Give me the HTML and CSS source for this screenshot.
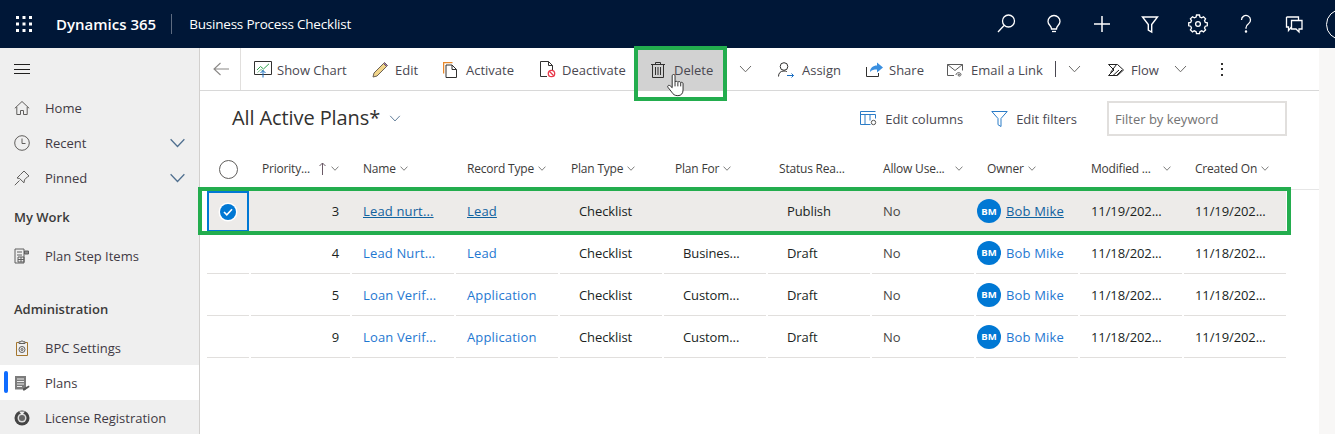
FILE: index.html
```html
<!DOCTYPE html>
<html>
<head>
    <title>Business Process Checklist</title>
    <link rel="stylesheet" href="styles.css">
</head>
<body>
    <svg class="sprite" width="0" height="0">
        <symbol id="chev" viewBox="0 0 12 8"><path d="M.5 1 6 6.800 11.500 1" fill="none" stroke="currentColor" stroke-width="1"/></symbol>
    </svg>

    <header class="topbar">
        <svg class="waffle" width="16" height="16" viewBox="0 0 16 16" fill="#fff">
            <rect x="0" y="0" width="3" height="3"/><rect x="6.500" y="0" width="3" height="3"/><rect x="13" y="0" width="3" height="3"/>
            <rect x="0" y="6.500" width="3" height="3"/><rect x="6.500" y="6.500" width="3" height="3"/><rect x="13" y="6.500" width="3" height="3"/>
            <rect x="0" y="13" width="3" height="3"/><rect x="6.500" y="13" width="3" height="3"/><rect x="13" y="13" width="3" height="3"/>
        </svg>
        <span class="brand">Dynamics 365</span>
        <span class="app-name">Business Process Checklist</span>
        <div class="top-icons">
            <svg width="48" height="48" viewBox="0 0 48 48" fill="none" stroke="#fff" stroke-width="1.300"><circle cx="26.500" cy="21" r="6"/><path d="M22 25.500 16 32"/></svg>
            <svg width="48" height="48" viewBox="0 0 48 48" fill="none" stroke="#fff" stroke-width="1.300"><path d="M21.500 29c0-3.500-3.500-4-3.500-7.500a6 6 0 0 1 12 0c0 3.500-3.500 4-3.500 7.500z"/><path d="M22 31.500h4"/></svg>
            <svg width="48" height="48" viewBox="0 0 48 48" fill="none" stroke="#fff" stroke-width="1.500"><path d="M24 16v16M16 24h16"/></svg>
            <svg width="48" height="48" viewBox="0 0 48 48" fill="none" stroke="#fff" stroke-width="1.400"><path d="M16.500 17h15l-5.800 7.500V32l-3.400-2v-5.500z"/></svg>
            <svg width="48" height="48" viewBox="0 0 48 48" fill="none" stroke="#fff" stroke-width="1.300"><circle cx="24" cy="24" r="2.400"/><path d="M22.500 16.500h3l.4 2 1.800.8 1.800-1.100 2.100 2.100-1.100 1.800.8 1.800 2 .4v3l-2 .4-.8 1.800 1.100 1.800-2.100 2.100-1.800-1.100-1.800.8-.4 2h-3l-.4-2-1.800-.8-1.800 1.100-2.100-2.100 1.100-1.800-.8-1.800-2-.4v-3l2-.4.8-1.800-1.100-1.800 2.100-2.100 1.800 1.100 1.800-.8z" transform="translate(0 -1.500)"/></svg>
            <svg width="48" height="48" viewBox="0 0 48 48" fill="none" stroke="#fff" stroke-width="1.300"><path d="M19.500 20a4.500 4.500 0 1 1 7 3.700c-1.600 1.100-2.500 2-2.500 4v1"/><circle cx="24" cy="31.500" r=".6" fill="#fff"/></svg>
            <svg width="48" height="48" viewBox="0 0 48 48" fill="none" stroke="#fff" stroke-width="1.300"><path d="M16.500 17h12v3M16.500 17v10h2v3.500l3-3.500"/><path d="M21.500 20.500h10.500v8.500h-3v3l-3-3h-4.500z"/></svg>
        </div>
        <span class="top-avatar"></span>
    </header>

    <div class="layout">
        <nav class="sidebar">
            <div class="burger"><span></span><span></span><span></span></div>

            <a class="nav-item">
                <svg width="16" height="16" viewBox="0 0 16 16" fill="none" stroke="#605e5c"><path d="M.8 8.300 8 1.500l7.200 6.800M2.800 7v7.500h3.700v-4h3v4h3.700V7"/></svg>
                Home
            </a>
            <a class="nav-item">
                <svg width="16" height="16" viewBox="0 0 16 16" fill="none" stroke="#605e5c"><circle cx="8" cy="8" r="7.300"/><path d="M8 3.500V8.500h3.500"/></svg>
                Recent
                <svg class="nav-chev" width="17" height="10"><use href="#chev"/></svg>
            </a>
            <a class="nav-item">
                <svg width="16" height="16" viewBox="0 0 16 16" fill="none" stroke="#605e5c"><path d="m10 1 5 5-1.500.8-3 3-.5 3L5.500 8.500l-2.500-.5 3.500-3.500zM5.500 10.500.8 15.200"/></svg>
                Pinned
                <svg class="nav-chev" width="17" height="10"><use href="#chev"/></svg>
            </a>

            <div class="nav-group">My Work</div>
            <a class="nav-item">
                <svg width="16" height="16" viewBox="0 0 16 16" fill="none" stroke="#5f5f5f"><path d="M1 1h9v14H1zM3 4h5M3 7h5"/><path d="M10.500 3h4v3h-4z" fill="#8a8a8a"/><path d="M4 9h6v5H4zM7 9v5M4 11.500h6"/></svg>
                Plan Step Items
            </a>

            <div class="nav-group nav-group-gap">Administration</div>
            <a class="nav-item">
                <svg width="16" height="16" viewBox="0 0 16 16" fill="none" stroke="#605e5c"><path d="M5 2.500H2.500v13h11v-13H11" stroke="#a5762c"/><path d="M5 3.500V1.800h2a1 1 0 0 1 2 0h2v1.700z"/><circle cx="8" cy="9.500" r="3"/><circle cx="8" cy="9.500" r="1"/></svg>
                BPC Settings
            </a>
            <a class="nav-item active">
                <svg width="16" height="16" viewBox="0 0 16 16"><path d="M1 1h11v13.500H1z" fill="#7c7c7c"/><path d="M3 4h7M3 6.500h7M3 9h7M3 11.500h5" stroke="#eee"/><path d="m9 13.500 6-3 .5 1.500-5 3.500H9z" fill="#555"/></svg>
                Plans
            </a>
            <a class="nav-item">
                <svg width="16" height="16" viewBox="0 0 16 16"><circle cx="8" cy="8" r="7.500" fill="#444"/><circle cx="8" cy="8" r="4.500" fill="#ddd"/><circle cx="8" cy="8" r="3" fill="#666"/><path d="M5 1.500h6L8 5z" fill="#efefef"/></svg>
                License Registration
            </a>
        </nav>

        <main class="content">
            <div class="commandbar">
                <span class="back">
                    <svg width="16" height="14" viewBox="0 0 16 14" fill="none" stroke="#8a8886" stroke-width="1.100"><path d="M7.500 1 1 7l6.500 6M1 7h15"/></svg>
                </span>
                <a class="cmd w-chart">
                    <svg width="18" height="17" viewBox="0 0 18 17" fill="none"><path d="M.5.500h17v13H.500z" stroke="#323130"/><path d="m3 9 3.500-3.500 3 2.500L15 2.800" stroke="#2fa24b"/><path d="m3.500 11.500 3.500-3 2.500 1.500" stroke="#7fc28f"/><path d="M9 16.500V9.500M6.500 12 9 9.500l2.500 2.500" stroke="#1b6ec2"/></svg>
                    Show Chart
                </a>
                <a class="cmd w-edit">
                    <svg width="16" height="16" viewBox="0 0 16 16"><path d="M1 15l1-4L11.500 1.500l3 3L5 14z" fill="#f2d58a" stroke="#6b6054"/><path d="m11.500 1.500 1-1 3 3-1 1z" fill="#a377b8" stroke="#6b6054"/></svg>
                    Edit
                </a>
                <a class="cmd w-activate">
                    <svg width="15" height="16" viewBox="0 0 15 16" fill="none"><path d="M.5 11.500V.500h9" stroke="#e8882b" stroke-width="1.500"/><path d="M3 3h6l4.500 4.500v8H3z" fill="#fff" stroke="#323130"/><path d="M9 3v4.500h4.500" stroke="#323130"/></svg>
                    Activate
                </a>
                <a class="cmd w-deactivate">
                    <svg width="16" height="17" viewBox="0 0 16 17" fill="none"><path d="M7 15.500H.500V.500h8l4 4v5M8.500.500v4h4" stroke="#323130"/><circle cx="11.500" cy="12.500" r="3.200" stroke="#e8394a" stroke-width="1.300"/><path d="m9.300 10.300 4.400 4.400" stroke="#e8394a" stroke-width="1.300"/></svg>
                    Deactivate
                </a>
                <a class="cmd cmd-delete">
                    <svg width="14" height="16" viewBox="0 0 14 16" fill="none" stroke="#323130"><path d="M0 2.500h14M4.500 2.500V.500h5v2M1.500 2.500v13h11v-13M4.500 5v8M7 5v8M9.500 5v8"/></svg>
                    Delete
                    <span class="callout"></span>
                    <svg class="hand" width="17" height="23" viewBox="0 0 18 26" preserveAspectRatio="none"><path d="M5.500 2c0-2 3-2 3 0v7c.5-1 2.500-1 3 .3.500-1 2.500-1 3 .4 1-.7 2.500-.2 2.500 1.300v7c0 4-2 6.500-5.500 6.500S6.500 23 5 20.500L1 15c-1-1.700 1-3 2.500-1.500l2 2z" fill="#fff" stroke="#222"/><path d="M8.500 9v5M11.500 9.500V14M14.500 10v4" stroke="#222" fill="none"/></svg>
                </a>
                <span class="chev-wrap w-delchev"><svg width="13" height="8"><use href="#chev"/></svg></span>
                <a class="cmd w-assign">
                    <svg width="16" height="16" viewBox="0 0 16 16" fill="none"><circle cx="6" cy="4.500" r="3.800" stroke="#323130"/><path d="M.5 14.500c0-3.500 2-5.500 5.500-5.500 1 0 2 .2 2.800.6" stroke="#323130"/><path d="M9 13.500h6.500M13.500 11.500l2 2-2 2" stroke="#1b6ec2"/></svg>
                    Assign
                </a>
                <a class="cmd w-share">
                    <svg width="17" height="15" viewBox="0 0 17 15"><path d="M.5 5v9.500h12V11" fill="none" stroke="#323130"/><path d="M4 10c0-4 3-6.500 7-6.500V.5l6 5-6 5V7.500C8 7.500 5.500 8 4 10z" fill="#3a8fe0"/></svg>
                    Share
                </a>
                <a class="cmd w-email">
                    <svg width="16" height="14" viewBox="0 0 16 14" fill="none" stroke="#5a5a5a"><path d="M7 12.500H.500v-11h15v6"/><path d="m.5 1.500 7.500 6 7.500-6"/><path d="M9 12c0-3 5-3 5-.5 0 2-3 2-3 .5s2-1 2 0"/></svg>
                    Email a Link
                </a>
                <span class="cmd-sep"></span>
                <span class="chev-wrap w-emailchev"><svg width="13" height="8"><use href="#chev"/></svg></span>
                <a class="cmd w-flow">
                    <svg width="16" height="12" viewBox="0 0 16 12" fill="none" stroke="#222"><path d="M.5.500h9L15.500 6l-6 5.500h-9L6 6z"/><path d="m5 11.500 6-5.500M2.500 8.500 8.500 .5M9 11 14 6"/></svg>
                    Flow
                </a>
                <span class="chev-wrap w-flowchev"><svg width="13" height="8"><use href="#chev"/></svg></span>
                <span class="dots"><i></i><i></i><i></i></span>
            </div>

            <div class="titlebar">
                <h1>All Active Plans*</h1>
                <svg class="title-chev" width="12" height="7"><use href="#chev"/></svg>
                <a class="tool tool-cols">
                    <svg width="17" height="15" viewBox="0 0 17 15" fill="none" stroke="#2b7cc7"><path d="M.5.500h15M.5 3.500h15v4M.5 .5v13h10M5 3.500v10M10 3.500v6"/><circle cx="13.500" cy="11.500" r="2.200" stroke="#555"/></svg>
                    Edit columns
                </a>
                <a class="tool tool-filters">
                    <svg width="17" height="16" viewBox="0 0 17 16" fill="none" stroke="#2b7cc7"><path d="M.8.500h15.400L10 7.500v8l-3-1.800V7.500z"/></svg>
                    Edit filters
                </a>
                <input class="filter" type="text" placeholder="Filter by keyword">
            </div>

            <div class="grid-head row">
                <div class="cell-check"><span class="ring"></span></div>
                <div class="th">Priority...<svg class="sort" width="7" height="13" viewBox="0 0 7 13" fill="none" stroke="#6a5a66"><path d="M3.500 13V1M.5 4l3-3 3 3"/></svg><svg class="th-chev" width="8" height="5"><use href="#chev"/></svg></div>
                <div class="th">Name<svg class="th-chev" width="8" height="5"><use href="#chev"/></svg></div>
                <div class="th">Record Type<svg class="th-chev" width="8" height="5"><use href="#chev"/></svg></div>
                <div class="th">Plan Type<svg class="th-chev" width="8" height="5"><use href="#chev"/></svg></div>
                <div class="th">Plan For<svg class="th-chev" width="8" height="5"><use href="#chev"/></svg></div>
                <div class="th">Status Rea...</div>
                <div class="th th-wide">Allow Use...<svg class="th-chev" width="8" height="5"><use href="#chev"/></svg></div>
                <div class="th">Owner<svg class="th-chev" width="8" height="5"><use href="#chev"/></svg></div>
                <div class="th th-wide">Modified ...<svg class="th-chev" width="8" height="5"><use href="#chev"/></svg></div>
                <div class="th">Created On<svg class="th-chev" width="8" height="5"><use href="#chev"/></svg></div>
            </div>

            <div class="row data selected">
                <div class="cell-check focus"><span class="tick"><svg width="10" height="8" viewBox="0 0 10 8" fill="none" stroke="#fff" stroke-width="1.600"><path d="m1 4 2.800 2.800L9 1.200"/></svg></span></div>
                <div class="td num">3</div>
                <div class="td"><a class="link">Lead nurt...</a></div>
                <div class="td"><a class="link">Lead</a></div>
                <div class="td pad">Checklist</div>
                <div class="td pad"></div>
                <div class="td pad">Publish</div>
                <div class="td muted">No</div>
                <div class="td owner"><span class="avatar">BM</span><a class="link">Bob Mike</a></div>
                <div class="td">11/19/202...</div>
                <div class="td">11/19/202...</div>
                <span class="callout"></span>
            </div>
            <div class="row data">
                <div class="cell-check"></div>
                <div class="td num">4</div>
                <div class="td"><a class="link">Lead Nurt...</a></div>
                <div class="td"><a class="link">Lead</a></div>
                <div class="td pad">Checklist</div>
                <div class="td pad">Busines...</div>
                <div class="td pad">Draft</div>
                <div class="td muted">No</div>
                <div class="td owner"><span class="avatar">BM</span><a class="link">Bob Mike</a></div>
                <div class="td">11/18/202...</div>
                <div class="td">11/18/202...</div>
            </div>
            <div class="row data">
                <div class="cell-check"></div>
                <div class="td num">5</div>
                <div class="td"><a class="link">Loan Verif...</a></div>
                <div class="td"><a class="link">Application</a></div>
                <div class="td pad">Checklist</div>
                <div class="td pad">Custom...</div>
                <div class="td pad">Draft</div>
                <div class="td muted">No</div>
                <div class="td owner"><span class="avatar">BM</span><a class="link">Bob Mike</a></div>
                <div class="td">11/18/202...</div>
                <div class="td">11/18/202...</div>
            </div>
            <div class="row data">
                <div class="cell-check"></div>
                <div class="td num">9</div>
                <div class="td"><a class="link">Loan Verif...</a></div>
                <div class="td"><a class="link">Application</a></div>
                <div class="td pad">Checklist</div>
                <div class="td pad">Custom...</div>
                <div class="td pad">Draft</div>
                <div class="td muted">No</div>
                <div class="td owner"><span class="avatar">BM</span><a class="link">Bob Mike</a></div>
                <div class="td">11/18/202...</div>
                <div class="td">11/19/202...</div>
            </div>
        </main>
        <div class="gutter"></div>
    </div>
</body>
</html>
```

FILE: styles.css
```css
html, body {
    height: 100%;
}
body {
    margin: 0;
    font-family: "Open Sans", "Noto Sans", sans-serif;
    font-size: 13px;
    color: #323130;
    overflow: hidden;
}
.sprite {
    position: absolute;
}
svg {
    display: block;
    flex: none;
}

/* top bar */
.topbar {
    height: 48px;
    background: #001737;
    color: #fff;
    display: flex;
    align-items: center;
    overflow: hidden;
}
.waffle {
    margin-left: 16px;
}
.brand {
    margin-left: 24px;
    font-size: 15px;
    font-weight: 600;
    padding-right: 15px;
    border-right: 1px solid #5d6b80;
    line-height: 20px;
}
.app-name {
    margin-left: 17px;
    font-size: 13.500px;
    letter-spacing: -0.2px;
}
.top-icons {
    margin-left: auto;
    display: flex;
}
.top-avatar {
    flex: none;
    width: 29px;
    height: 29px;
    margin: 0 -22px 0 8px;
    border: 1px solid #fff;
    border-radius: 50%;
}

.layout {
    display: flex;
    height: calc(100% - 48px);
}

/* left nav */
.sidebar {
    width: 199px;
    flex: none;
    background: #efefef;
    border-right: 1px solid #d2d0ce;
}
.burger {
    height: 42px;
    padding: 16px 0 0 14px;
    box-sizing: border-box;
}
.burger span {
    display: block;
    width: 16px;
    height: 1px;
    background: #201f1e;
    margin-bottom: 3.500px;
}
.nav-item {
    height: 35px;
    display: flex;
    align-items: center;
    gap: 15px;
    padding-left: 14px;
    position: relative;
    color: #3f3a44;
}
.nav-chev {
    margin-left: auto;
    margin-right: 13px;
    color: #4f6f8f;
}
.nav-group {
    height: 43px;
    line-height: 44px;
    padding-left: 14px;
    font-weight: 600;
    color: #3b3a39;
}
.nav-group-gap {
    margin-top: 15px;
    height: 42px;
    line-height: 42px;
}
.nav-item.active {
    background: #fff;
}
.nav-item.active::before {
    content: "";
    position: absolute;
    left: 4px;
    top: 6px;
    width: 4px;
    height: 22px;
    border-radius: 2px;
    background: #0f6cff;
}

/* main */
.content {
    width: 1119px;
    flex: none;
}
.gutter {
    flex: 1;
    background: #f8f7f6;
}
.commandbar {
    height: 42px;
    border-bottom: 1px solid #d8d8d8;
    display: flex;
    align-items: center;
    color: #4a4851;
}
.back {
    width: 41px;
    height: 42px;
    border-right: 1px solid #e1dfdd;
    display: flex;
    align-items: center;
    padding-left: 13px;
    box-sizing: border-box;
    margin-right: 13px;
}
.cmd {
    display: flex;
    align-items: center;
    gap: 6px;
    flex: none;
    height: 41px;
    padding-top: 1px;
    box-sizing: border-box;
    white-space: nowrap;
}
.w-chart { width: 118px; gap: 5px; }
.w-edit { width: 71px; gap: 7px; }
.w-activate { width: 97px; gap: 8px; }
.w-deactivate { width: 98px; gap: 6px; }
.cmd-delete {
    width: 85px;
    background: #d2d2d2;
    padding: 0 0 2px 13px;
    gap: 9px;
    position: relative;
    align-self: flex-start;
    margin-top: 2px;
}
.w-delchev { width: 55px; padding-left: 16px; }
.w-assign { width: 88px; gap: 8px; }
.w-share { width: 81px; gap: 6px; }
.w-email { width: 108px; gap: 8px; }
.cmd-sep {
    width: 1px;
    height: 16px;
    background: #4a4851;
    flex: none;
}
.chev-wrap {
    flex: none;
    box-sizing: border-box;
    color: #6b6a68;
}
.w-emailchev { width: 52px; padding-left: 12px; }
.w-flow { width: 66px; gap: 7px; }
.w-flowchev { width: 47px; }
.dots i {
    display: block;
    width: 2px;
    height: 2px;
    margin: 3.500px 0;
    background: #323130;
}
.callout {
    position: absolute;
    border: 4px solid #23ad4e;
    pointer-events: none;
}
.cmd-delete .callout {
    left: -4px;
    right: -4px;
    top: -4px;
    bottom: -10px;
}
.hand {
    position: absolute;
    left: 29px;
    top: 24px;
}

/* title row */
.titlebar {
    height: 57px;
    display: flex;
    align-items: center;
    padding-left: 32px;
    padding-bottom: 2px;
    box-sizing: border-box;
}
.titlebar h1 {
    margin: 0 0 2px;
    font-size: 20px;
    font-weight: 500;
    letter-spacing: -0.1px;
    color: #323130;
}
.title-chev {
    margin-left: 9px;
    color: #4a6a8a;
}
.tool {
    display: flex;
    align-items: center;
    gap: 8px;
    color: #4a4851;
    flex: none;
}
.tool-cols {
    margin-left: auto;
    margin-right: 28px;
}
.tool-filters {
    margin-right: 30px;
}
.filter {
    width: 180px;
    height: 35px;
    margin-right: 32px;
    box-sizing: border-box;
    border: 2px solid #e1dfdd;
    padding: 0 6px;
    font: inherit;
    outline: none;
}
.filter::placeholder {
    color: #737373;
}

/* grid */
.row {
    display: grid;
    grid-template-columns: 42px 99px repeat(9, 102px);
    column-gap: 2px;
    margin-left: 7px;
    width: 1079px;
    height: 42px;
    align-items: stretch;
    position: relative;
}
.grid-head {
    width: 1112px;
    box-shadow: inset 0 -1px 0 #e6e6e6;
    color: #3b3a39;
    font-size: 12px;
    font-weight: 500;
    letter-spacing: -0.2px;
}
.cell-check {
    display: flex;
    align-items: center;
    justify-content: center;
    box-sizing: border-box;
}
.data .cell-check, .data .td {
    border-bottom: 1px solid #e1dfdd;
}
.ring {
    width: 17px;
    height: 17px;
    border: 1.500px solid #605e5c;
    border-radius: 50%;
}
.th {
    display: flex;
    align-items: center;
    padding: 0 0 2px 11px;
    white-space: nowrap;
}
.th-chev {
    margin-left: 4px;
    color: #323130;
}
.th-wide .th-chev {
    margin-left: auto;
    margin-right: 11px;
}
.sort {
    margin-left: 9px;
    margin-right: 1px;
}
.td {
    display: flex;
    align-items: center;
    padding-left: 11px;
    white-space: nowrap;
    color: #201f1e;
    letter-spacing: -0.1px;
}
.td.pad {
    padding-left: 19px;
}
.td.num {
    justify-content: flex-end;
    padding: 0 11px 0 0;
}
.td.muted {
    color: #484644;
}
.td.owner {
    padding-left: 1px;
    gap: 5px;
}
.link {
    color: #1f78d1;
    letter-spacing: 0.15px;
}
.avatar {
    width: 24px;
    height: 24px;
    border-radius: 50%;
    background: #0078d4;
    color: #fff;
    font-size: 9.500px;
    font-weight: 700;
    letter-spacing: 0;
    display: flex;
    align-items: center;
    justify-content: center;
}
.row.selected {
    background: #edebe9;
}
.selected .td, .selected .cell-check {
    border-bottom: none;
}
.selected .link {
    color: #11629f;
    text-decoration: underline;
}
.selected .focus {
    border: 2px solid #0078d4;
    margin: 1px 0 0 0;
}
.tick {
    width: 16px;
    height: 16px;
    border-radius: 50%;
    background: #0078d4;
    box-shadow: 0 0 0 1.500px #fff;
    display: flex;
    align-items: center;
    justify-content: center;
}
.selected .callout {
    left: -9px;
    right: -5px;
    top: -3px;
    bottom: -3px;
}
```
